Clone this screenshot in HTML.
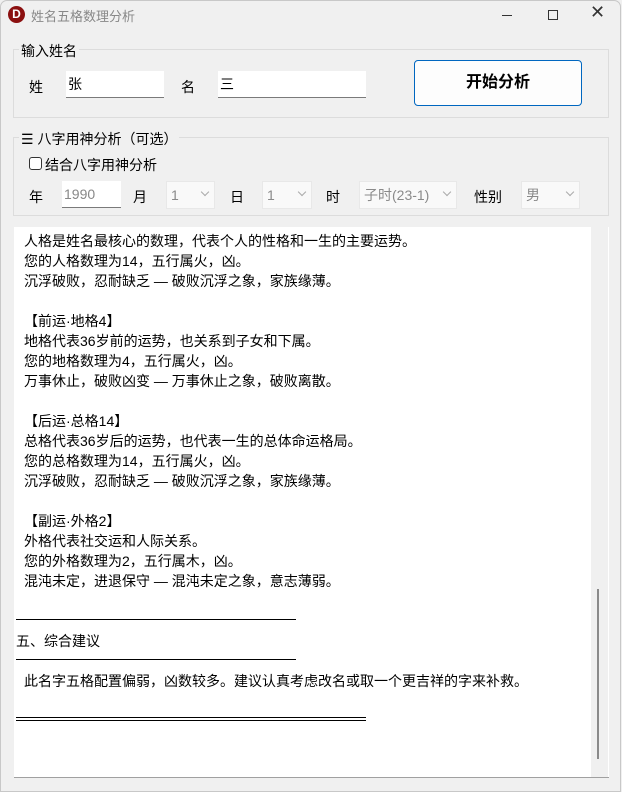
<!DOCTYPE html>
<html><head><meta charset="utf-8"><style>
*{margin:0;padding:0;box-sizing:border-box}
body{width:622px;height:792px;background:#f0f0f0;font-family:"Liberation Sans","Microsoft YaHei","Noto Sans CJK SC",sans-serif;font-size:14px;color:#000;position:relative;overflow:hidden}
.a{position:absolute;white-space:nowrap}
.win{position:absolute;left:0;top:0;width:621px;height:792px;border:1px solid #c8c8c8;border-radius:7px 7px 0 0}
.fs{position:absolute;border:1px solid #dcdcdc}
.lg{position:absolute;background:#f0f0f0;padding:0 2px;font-size:14px}
.tb{position:absolute;background:#fff;border-bottom:1px solid #7a7a7a;height:27px;padding-left:2px;line-height:26px;font-size:14px}
.cb{position:absolute;background:#f9f9f9;border:1px solid #e8e8e8;height:28px;color:#8a8a8a;font-size:14px;line-height:26px;padding-left:4px}
.cb i{position:absolute;right:6px;top:7px;width:6px;height:6px;border-right:1px solid #aaa;border-bottom:1px solid #aaa;transform:rotate(45deg)}
.txt{position:absolute;left:14px;top:227px;width:595px;height:551px;background:#fff;border-bottom:1px solid #a0a0a0}
.l{position:absolute;left:10px;font-size:14px;white-space:nowrap;line-height:16px}
.hr{position:absolute;height:1px;background:#000}
</style></head><body>
<div class="win"></div>
<div class="a" style="left:8px;top:6px;width:17px;height:17px;border-radius:50%;background:#8b1010;color:#fff;font-weight:bold;font-size:12px;text-align:center;line-height:17px">D</div>
<div class="a" style="left:31px;top:6px;color:#888;font-size:13px">姓名五格数理分析</div>
<div class="a" style="left:502px;top:15px;width:10px;height:1px;background:#333"></div>
<div class="a" style="left:548px;top:10px;width:10px;height:10px;border:1px solid #333"></div>
<div class="a" style="left:590px;top:2px;font-size:18px;color:#333">✕</div>

<div class="fs" style="left:13px;top:49px;width:596px;height:69px"></div>
<div class="lg" style="left:19px;top:41px">输入姓名</div>
<div class="a" style="left:29px;top:77px;font-size:14px">姓</div>
<div class="tb" style="left:66px;top:71px;width:98px">张</div>
<div class="a" style="left:181px;top:77px;font-size:14px">名</div>
<div class="tb" style="left:218px;top:71px;width:148px">三</div>
<div class="a" style="left:414px;top:60px;width:168px;height:46px;border:1px solid #0067c0;border-radius:4px;background:#fdfdfd;text-align:center;line-height:44px;font-weight:bold;font-size:16px">开始分析</div>

<div class="fs" style="left:13px;top:137px;width:596px;height:79px"></div>
<div class="lg" style="left:19px;top:129px">☰ 八字用神分析（可选）</div>
<div class="a" style="left:29px;top:157px;width:13px;height:13px;border:1px solid #333;border-radius:3px;background:#fff"></div>
<div class="a" style="left:45px;top:155px">结合八字用神分析</div>
<div class="a" style="left:29px;top:187px;font-size:14px">年</div>
<div class="tb" style="left:62px;top:181px;width:59px;color:#888">1990</div>
<div class="a" style="left:133px;top:187px;font-size:14px">月</div>
<div class="cb" style="left:166px;top:181px;width:49px">1<i></i></div>
<div class="a" style="left:230px;top:187px;font-size:14px">日</div>
<div class="cb" style="left:262px;top:181px;width:50px">1<i></i></div>
<div class="a" style="left:326px;top:187px;font-size:14px">时</div>
<div class="cb" style="left:359px;top:181px;width:98px">子时(23-1)<i></i></div>
<div class="a" style="left:474px;top:187px;font-size:14px">性别</div>
<div class="cb" style="left:521px;top:181px;width:59px">男<i></i></div>

<div class="txt">
<div class="a" style="left:577px;top:0;width:17px;height:550px;background:#f0f0f0"></div>
<div class="a" style="left:583px;top:362px;width:2px;height:170px;background:#8a8a8a"></div>
<div class="l" style="top:6px">人格是姓名最核心的数理，代表个人的性格和一生的主要运势。</div>
<div class="l" style="top:26px">您的人格数理为14，五行属火，凶。</div>
<div class="l" style="top:46px">沉浮破败，忍耐缺乏 — 破败沉浮之象，家族缘薄。</div>
<div class="l" style="top:86px">【前运·地格4】</div>
<div class="l" style="top:106px">地格代表36岁前的运势，也关系到子女和下属。</div>
<div class="l" style="top:126px">您的地格数理为4，五行属火，凶。</div>
<div class="l" style="top:146px">万事休止，破败凶变 — 万事休止之象，破败离散。</div>
<div class="l" style="top:186px">【后运·总格14】</div>
<div class="l" style="top:206px">总格代表36岁后的运势，也代表一生的总体命运格局。</div>
<div class="l" style="top:226px">您的总格数理为14，五行属火，凶。</div>
<div class="l" style="top:246px">沉浮破败，忍耐缺乏 — 破败沉浮之象，家族缘薄。</div>
<div class="l" style="top:286px">【副运·外格2】</div>
<div class="l" style="top:306px">外格代表社交运和人际关系。</div>
<div class="l" style="top:326px">您的外格数理为2，五行属木，凶。</div>
<div class="l" style="top:346px">混沌未定，进退保守 — 混沌未定之象，意志薄弱。</div>
<div class="hr" style="left:2px;top:392px;width:280px"></div>
<div class="l" style="left:2px;top:406px">五、综合建议</div>
<div class="hr" style="left:2px;top:432px;width:280px"></div>
<div class="l" style="left:10px;top:446px">此名字五格配置偏弱，凶数较多。建议认真考虑改名或取一个更吉祥的字来补救。</div>
<div class="hr" style="left:2px;top:490px;width:350px"></div>
<div class="hr" style="left:2px;top:493px;width:350px"></div>
</div>
</body></html>
